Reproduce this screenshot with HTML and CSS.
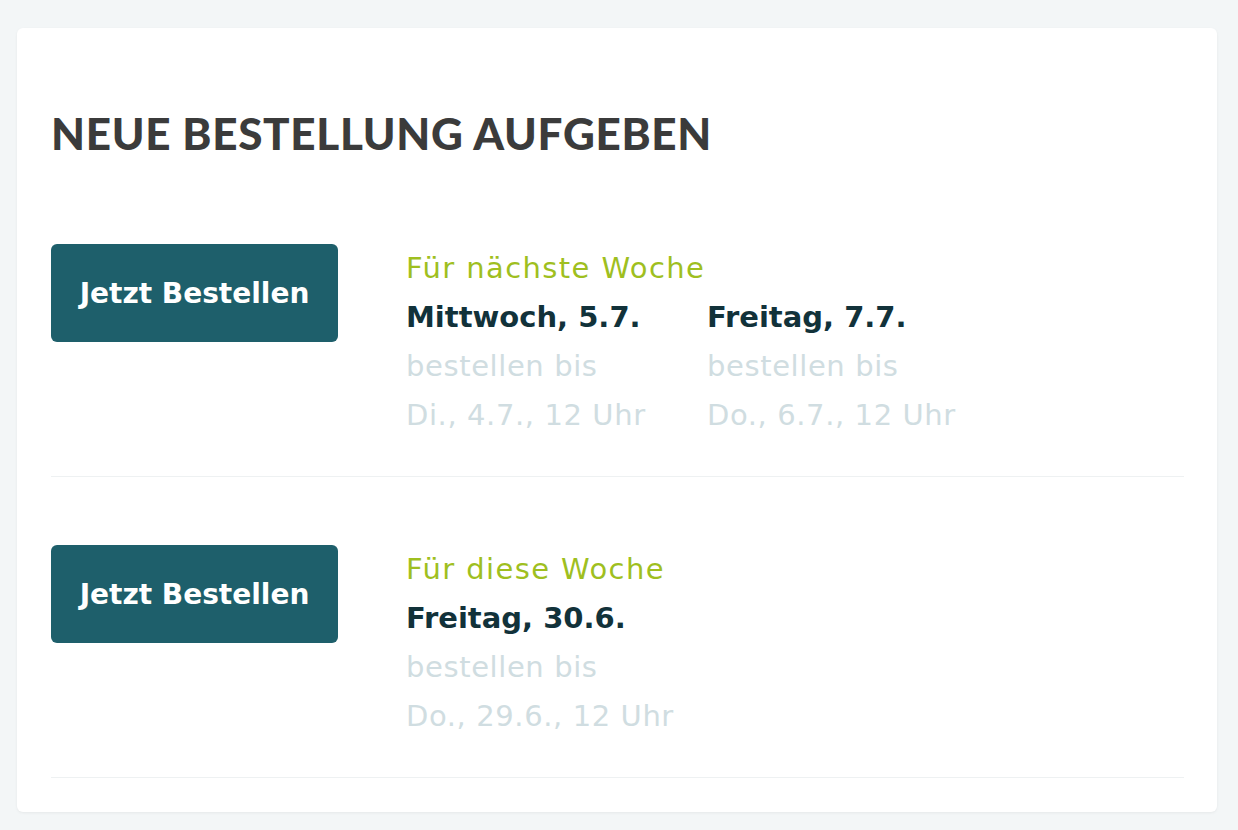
FILE: index.html
```html
<!DOCTYPE html>
<html lang="de">
  <head>
    <meta charset="UTF-8" />
    <meta name="viewport" content="width=device-width, initial-scale=1.0" />
    <title>Neue Bestellung aufgeben</title>
    <link rel="stylesheet" href="styles.css">
  </head>
  <body>
    <div class="card">
      <h1 class="card-title">Neue Bestellung aufgeben</h1>

      <!-- Next week -->
      <div class="order-row">
        <button class="order-btn">Jetzt Bestellen</button>
        <div class="order-info">
          <div class="week">Für nächste Woche</div>
          <div class="days">
            <div class="day">
              <div class="day-name">Mittwoch, 5.7.</div>
              <div class="deadline">bestellen bis</div>
              <div class="deadline">Di., 4.7., 12 Uhr</div>
            </div>
            <div class="day">
              <div class="day-name">Freitag, 7.7.</div>
              <div class="deadline">bestellen bis</div>
              <div class="deadline">Do., 6.7., 12 Uhr</div>
            </div>
          </div>
        </div>
      </div>

      <!-- This week -->
      <div class="order-row">
        <button class="order-btn">Jetzt Bestellen</button>
        <div class="order-info">
          <div class="week">Für diese Woche</div>
          <div class="days">
            <div class="day">
              <div class="day-name">Freitag, 30.6.</div>
              <div class="deadline">bestellen bis</div>
              <div class="deadline">Do., 29.6., 12 Uhr</div>
            </div>
          </div>
        </div>
      </div>
    </div>
  </body>
</html>
```

FILE: styles.css
```css
:root {
  --page-bg: #f3f6f7;
  --card-bg: #fff;
  --title: #3b3b3b;
  --btn: #1e5f6b;
  --green: #9fbf1f;
  --dark: #12323a;
  --muted: #d0dde1;
  --line: #eef1f2;
}

body {
  margin: 0;
  padding: 28px 21px 18px 17px;
  background: var(--page-bg);
  font-family: "DejaVu Sans", "Open Sans", sans-serif;
}

.card {
  background: var(--card-bg);
  border-radius: 6px;
  box-shadow: 0 1px 3px rgba(0, 0, 0, 0.06);
  padding: 79px 33px 34px 34px;
}

.card-title {
  margin: 0 0 16px;
  font-family: Lato, sans-serif;
  font-size: 44px;
  line-height: 53px;
  font-weight: 900;
  letter-spacing: 0.7px;
  text-transform: uppercase;
  color: var(--title);
}

.order-row {
  display: flex;
  align-items: flex-start;
  gap: 68px;
  padding: 68px 0 36px;
  border-bottom: 1px solid var(--line);
}

.order-btn {
  flex: 0 0 287px;
  height: 98px;
  border: 0;
  border-radius: 6px;
  background: var(--btn);
  color: #fff;
  font-family: inherit;
  font-size: 28px;
  font-weight: 700;
  cursor: pointer;
}

.order-info {
  font-size: 29px;
  line-height: 49px;
}

.week {
  color: var(--green);
  letter-spacing: 1.4px;
}

.days {
  display: grid;
  grid-template-columns: 301px 301px;
}

.day-name {
  font-weight: 700;
  color: var(--dark);
}

.deadline {
  color: var(--muted);
  letter-spacing: 0.6px;
}
```
